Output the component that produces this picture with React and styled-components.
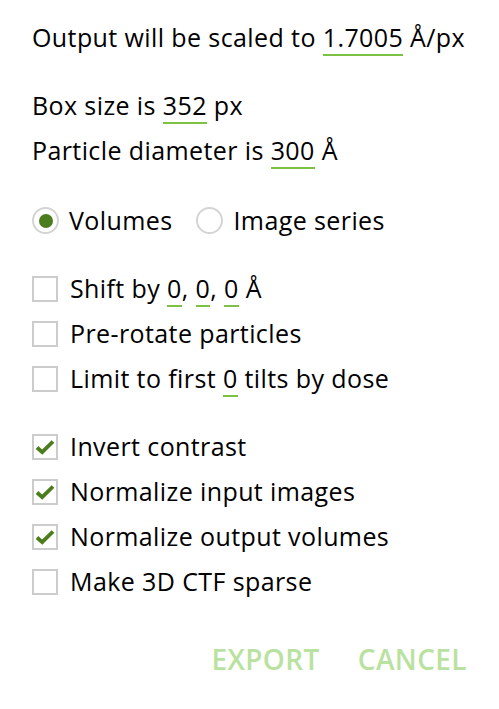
import React from "react";
import styled, { createGlobalStyle } from "styled-components";

const GlobalStyle = createGlobalStyle`
  html, body {
    margin: 0;
    padding: 0;
    background: #ffffff;
  }
  body {
    font-family: "Open Sans", "Noto Sans", sans-serif;
    color: #000000;
  }
`;

const Check = () => (
  <svg width="20" height="16" viewBox="0 0 20 16">
    <path d="M2 8.5 L7.2 13.2 L18 2.5" fill="none" stroke="#4b7d1c" strokeWidth="3.8" />
  </svg>
);

const CheckRow = ({ checked, children }) => (
  <Row>
    <Box>{checked && <Check />}</Box>
    <Label>{children}</Label>
  </Row>
);

const App = () => {
  return (
    <Panel>
      <GlobalStyle />
      <Section>
        <Row>
          <Label>
            Output will be scaled to <Value>1.7005</Value> Å/px
          </Label>
        </Row>
      </Section>
      <Section>
        <Row>
          <Label>
            Box size is <Value>352</Value> px
          </Label>
        </Row>
        <Row>
          <Label>
            Particle diameter is <Value>300</Value> Å
          </Label>
        </Row>
      </Section>
      <Section $extra={2}>
        <Row>
          <RadioItem>
            <Radio checked />
            <Label>Volumes</Label>
          </RadioItem>
          <RadioItem>
            <Radio />
            <Label>Image series</Label>
          </RadioItem>
        </Row>
      </Section>
      <Section>
        <CheckRow>
          Shift by <Value>0</Value>, <Value>0</Value>, <Value>0</Value> Å
        </CheckRow>
        <CheckRow>Pre-rotate particles</CheckRow>
        <CheckRow>
          Limit to first <Value>0</Value> tilts by dose
        </CheckRow>
      </Section>
      <Section>
        <CheckRow checked>Invert contrast</CheckRow>
        <CheckRow checked>Normalize input images</CheckRow>
        <CheckRow checked>Normalize output volumes</CheckRow>
        <CheckRow>Make 3D CTF sparse</CheckRow>
      </Section>
      <Buttons>
        <Button>EXPORT</Button>
        <Button>CANCEL</Button>
      </Buttons>
    </Panel>
  );
};

export default App;

const Panel = styled.div`
  width: 499px;
  height: 709px;
  box-sizing: border-box;
  padding: 15px 32px 0 32px;
  display: flex;
  flex-direction: column;
  gap: 23px;
`;

const Section = styled.div`
  display: flex;
  flex-direction: column;
  margin-top: ${(p) => p.$extra || 0}px;
`;

const Row = styled.div`
  height: 45px;
  display: flex;
  align-items: center;
  gap: 24px;
`;

const Label = styled.span`
  font-size: 25px;
  line-height: 1;
  white-space: nowrap;
  letter-spacing: 0.4px;
`;

const Value = styled.span`
  display: inline-block;
  padding-bottom: 4px;
  margin-bottom: -6px;
  border-bottom: 2px solid #7dc142;
`;

const Box = styled.div`
  width: 26px;
  height: 26px;
  box-sizing: border-box;
  border: 2px solid #cccccc;
  display: flex;
  align-items: center;
  justify-content: center;
  margin-right: -12px;
  flex-shrink: 0;
`;

const RadioItem = styled.div`
  display: flex;
  align-items: center;
  gap: 10px;
`;

const Radio = styled.div`
  width: 27px;
  height: 27px;
  box-sizing: border-box;
  border-radius: 50%;
  border: 2px solid #d4d4d4;
  display: flex;
  align-items: center;
  justify-content: center;

  &::after {
    content: "";
    width: 14px;
    height: 14px;
    border-radius: 50%;
    background: ${(p) => (p.checked ? "#4b7d1c" : "transparent")};
  }
`;

const Buttons = styled.div`
  display: flex;
  justify-content: flex-end;
  gap: 38px;
  margin-top: 13px;
`;

const Button = styled.span`
  font-size: 28px;
  font-weight: 600;
  color: #b9e2a0;
  letter-spacing: 0.4px;
`;
